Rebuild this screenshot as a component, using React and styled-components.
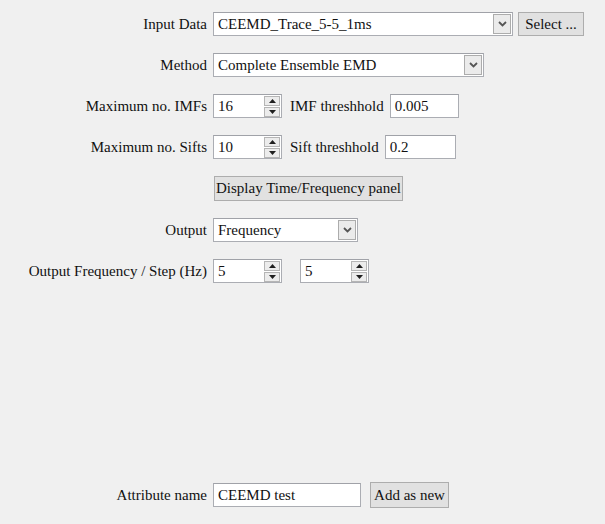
import React from "react";
import styled, { createGlobalStyle } from "styled-components";

const GlobalStyle = createGlobalStyle`
  html, body {
    margin: 0;
    padding: 0;
    background: #f0f0f0;
  }
`;

const Page = styled.div`
  display: flex;
  flex-direction: column;
  min-height: 100vh;
  box-sizing: border-box;
  padding: 12px 0 16px;
  font-family: "Liberation Serif", "Times New Roman", Times, serif;
  font-size: 15px;
  color: #111111;
`;

const Form = styled.div`
  display: grid;
  grid-template-columns: 207px 1fr;
  column-gap: 6px;
  row-gap: 17px;
  align-items: center;
`;

const Footer = styled(Form)`
  margin-top: auto;
`;

const Label = styled.div`
  text-align: right;
  white-space: nowrap;
  line-height: 24px;
`;

const InlineLabel = styled(Label)`
  margin-left: ${(p) => p.$offset || 0}px;
  margin-right: 6px;
`;

const Field = styled.div`
  display: flex;
  align-items: center;
  gap: ${(p) => p.$gap || 0}px;
`;

const Box = styled.div`
  box-sizing: border-box;
  display: flex;
  align-items: center;
  width: ${(p) => p.$w}px;
  height: 24px;
  background: #ffffff;
  border: 1px solid #abadb3;
  border-top-color: #a0a2a8;
  padding-left: 4px;
  white-space: nowrap;
  overflow: hidden;
`;

const Value = styled.span`
  flex: 1;
  line-height: 22px;
`;

const DropButton = styled.div`
  box-sizing: border-box;
  width: 18px;
  height: 20px;
  margin-right: 1px;
  border: 1px solid #acacac;
  background: #ebebeb;
  display: flex;
  align-items: center;
  justify-content: center;
`;

const SpinColumn = styled.div`
  display: flex;
  flex-direction: column;
  gap: 1px;
  margin-right: 1px;
`;

const SpinButton = styled.div`
  box-sizing: border-box;
  width: 16px;
  height: 10px;
  border: 1px solid #b5b5b5;
  background: #ececec;
  display: flex;
  align-items: center;
  justify-content: center;
`;

const Button = styled.div`
  box-sizing: border-box;
  width: ${(p) => p.$w}px;
  height: ${(p) => p.$h || 24}px;
  margin-left: ${(p) => p.$ml || 0}px;
  background: #e1e1e1;
  border: 1px solid #adadad;
  display: flex;
  align-items: center;
  justify-content: center;
  white-space: nowrap;
`;

const Chevron = () => (
  <svg width="9" height="6" viewBox="0 0 9 6">
    <path d="M1 1 L4.5 4.5 L8 1" fill="none" stroke="#555555" strokeWidth="1.8" />
  </svg>
);

const Tri = ({ up }) => (
  <svg width="7" height="4" viewBox="0 0 7 4">
    <path d={up ? "M0 4 L3.5 0 L7 4 Z" : "M0 0 L3.5 4 L7 0 Z"} fill="#1f1f1f" />
  </svg>
);

const Select = ({ value, width }) => (
  <Box $w={width}>
    <Value>{value}</Value>
    <DropButton>
      <Chevron />
    </DropButton>
  </Box>
);

const Spinner = ({ value }) => (
  <Box $w={69}>
    <Value>{value}</Value>
    <SpinColumn>
      <SpinButton>
        <Tri up />
      </SpinButton>
      <SpinButton>
        <Tri />
      </SpinButton>
    </SpinColumn>
  </Box>
);

const TextBox = ({ value, width }) => (
  <Box $w={width}>
    <Value>{value}</Value>
  </Box>
);

export default function App() {
  return (
    <>
      <GlobalStyle />
      <Page>
        <Form>
          <Label>Input Data</Label>
          <Field $gap={5}>
            <Select value="CEEMD_Trace_5-5_1ms" width={300} />
            <Button $w={66}>Select ...</Button>
          </Field>

          <Label>Method</Label>
          <Field>
            <Select value="Complete Ensemble EMD" width={271} />
          </Field>

          <Label>Maximum no. IMFs</Label>
          <Field>
            <Spinner value="16" />
            <InlineLabel $offset={8}>IMF threshhold</InlineLabel>
            <TextBox value="0.005" width={69} />
          </Field>

          <Label>Maximum no. Sifts</Label>
          <Field>
            <Spinner value="10" />
            <InlineLabel $offset={8}>Sift threshhold</InlineLabel>
            <TextBox value="0.2" width={71} />
          </Field>

          <div />
          <Field>
            <Button $w={189} $h={25} $ml={1}>Display Time/Frequency panel</Button>
          </Field>

          <Label>Output</Label>
          <Field>
            <Select value="Frequency" width={145} />
          </Field>

          <Label>Output Frequency / Step (Hz)</Label>
          <Field $gap={18}>
            <Spinner value="5" />
            <Spinner value="5" />
          </Field>
        </Form>

        <Footer>
          <Label>Attribute name</Label>
          <Field $gap={9}>
            <TextBox value="CEEMD test" width={148} />
            <Button $w={79} $h={26}>Add as new</Button>
          </Field>
        </Footer>
      </Page>
    </>
  );
}
